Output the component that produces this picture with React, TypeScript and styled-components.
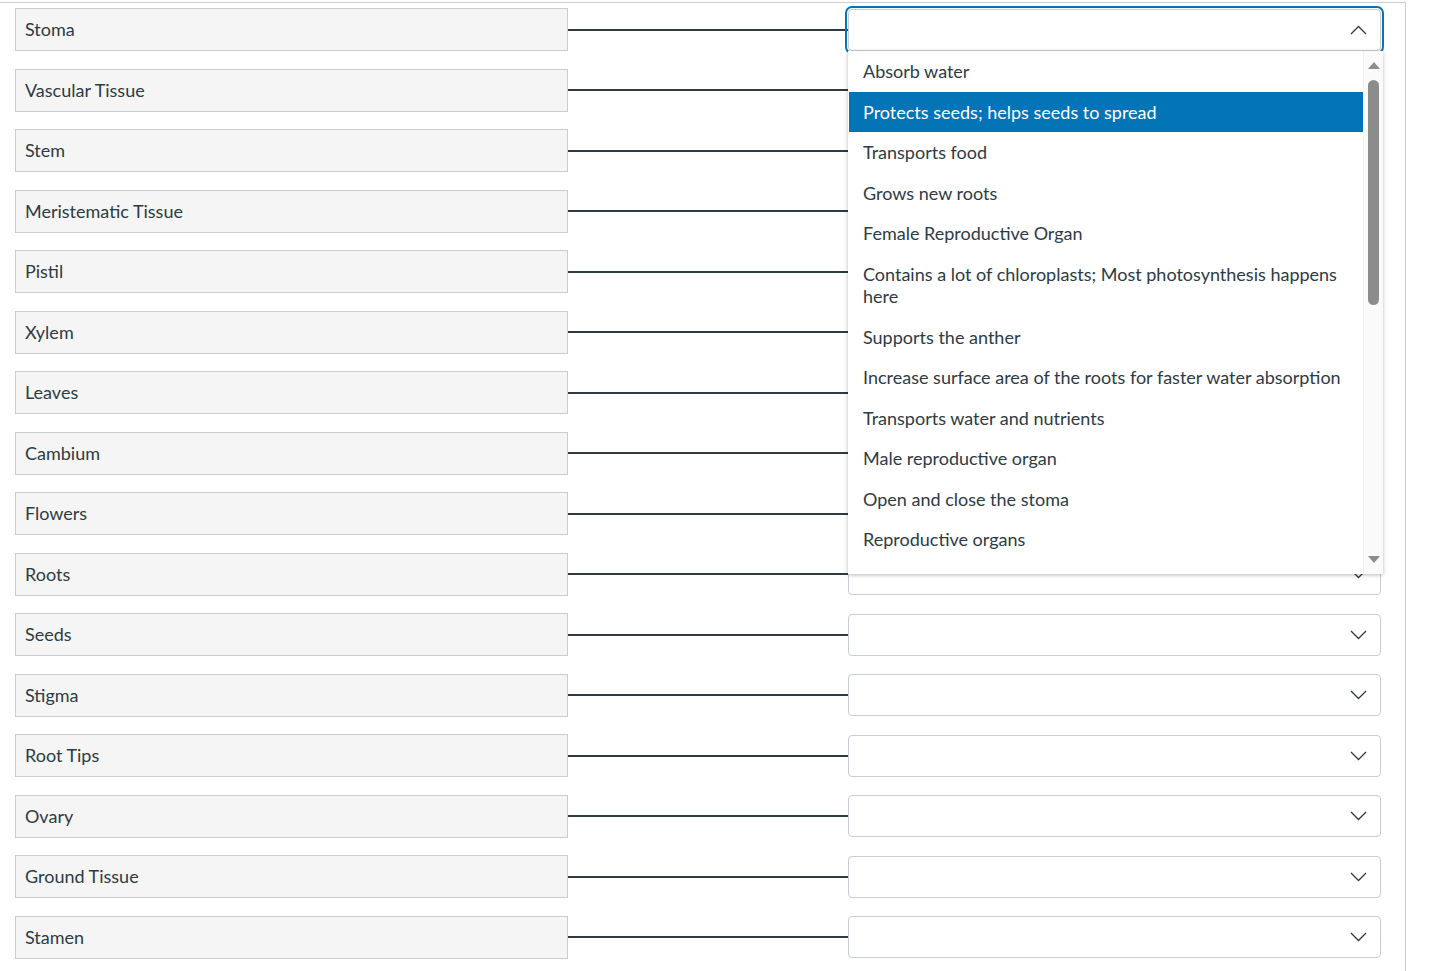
import styled, { createGlobalStyle } from "styled-components";

const GlobalStyle = createGlobalStyle`
  html, body {
    margin: 0;
    padding: 0;
    background: #fff;
    font-family: Lato, "Open Sans", sans-serif;
    color: #2d3b45;
  }
`

const Page = styled.div`
  padding-top: 2px;
  height: 969px;
  overflow: hidden;
`

const Frame = styled.div`
  position: relative;
  width: 1406px;
  height: 100%;
  box-sizing: border-box;
  border-top: 1px solid #c7cdd1;
  border-right: 1px solid #c7cdd1;
  padding: 5px 0 0 15px;
  display: flex;
  flex-direction: column;
  gap: 17.5px;
`

const Row = styled.div`
  display: flex;
  align-items: center;
  height: 43px;
`

const Term = styled.div`
  flex: 0 0 553px;
  height: 43px;
  box-sizing: border-box;
  background: #f5f5f5;
  border: 1px solid #c7cdd1;
  padding: 0 0 1px 9px;
  display: flex;
  align-items: center;
  font-size: 18px;
`

const Connector = styled.div`
  flex: 0 0 280px;
  height: 2px;
  background: #2d3b45;
`

const Select = styled.div<{ $open?: boolean }>`
  position: relative;
  flex: 0 0 533px;
  height: 42px;
  box-sizing: border-box;
  background: #fff;
  border: 1px solid #c7cdd1;
  border-radius: 4px;
  display: flex;
  align-items: center;
  justify-content: flex-end;
  padding-right: 13px;
  outline: ${(p) => (p.$open ? "2px solid #0374b5" : "none")};
  outline-offset: 1px;
`

const Menu = styled.div`
  position: absolute;
  left: 848px;
  top: 48px;
  width: 535px;
  height: 523px;
  background: #fff;
  box-shadow: 0 1px 4px rgba(0, 0, 0, 0.28);
  display: flex;
  z-index: 5;
`

const Options = styled.ul`
  flex: 1;
  margin: 0;
  padding: 0 0 0 1px;
  list-style: none;
  overflow: hidden;
`

const Option = styled.li<{ $active?: boolean }>`
  padding: 9px 14px;
  font-size: 18px;
  line-height: 22.5px;
  background: ${(p) => (p.$active ? "#0374b5" : "transparent")};
  color: ${(p) => (p.$active ? "#fff" : "#2d3b45")};
`

const Scrollbar = styled.div`
  flex: 0 0 20px;
  background: #fafafa;
  border-left: 1px solid #f0f0f0;
  display: flex;
  flex-direction: column;
  align-items: center;
  padding: 11px 0 11px;
  box-sizing: border-box;
`

const Thumb = styled.div`
  width: 11px;
  height: 225px;
  margin-top: 11px;
  border-radius: 6px;
  background: #8c8c8c;
`

const Arrow = styled.div<{ $down?: boolean }>`
  width: 0;
  height: 0;
  border-left: 6px solid transparent;
  border-right: 6px solid transparent;
  ${(p) =>
    p.$down
      ? "border-top: 7px solid #8c8c8c; margin-top: auto;"
      : "border-bottom: 7px solid #8c8c8c;"}
`

const Chevron = ({ up }: { up?: boolean }) => (
  <svg width="17" height="10" viewBox="0 0 17 10">
    <polyline
      points={up ? "1,9 8.5,1.5 16,9" : "1,1 8.5,8.5 16,1"}
      fill="none"
      stroke="#2d3b45"
      strokeWidth="1.3"
    />
  </svg>
)

const terms = [
  "Stoma",
  "Vascular Tissue",
  "Stem",
  "Meristematic Tissue",
  "Pistil",
  "Xylem",
  "Leaves",
  "Cambium",
  "Flowers",
  "Roots",
  "Seeds",
  "Stigma",
  "Root Tips",
  "Ovary",
  "Ground Tissue",
  "Stamen",
]

const options = [
  "Absorb water",
  "Protects seeds; helps seeds to spread",
  "Transports food",
  "Grows new roots",
  "Female Reproductive Organ",
  "Contains a lot of chloroplasts; Most photosynthesis happens here",
  "Supports the anther",
  "Increase surface area of the roots for faster water absorption",
  "Transports water and nutrients",
  "Male reproductive organ",
  "Open and close the stoma",
  "Reproductive organs",
]

export default function App() {
  return (
    <>
      <GlobalStyle />
      <Page>
        <Frame>
          {terms.map((t, i) => (
            <Row key={t}>
              <Term>{t}</Term>
              <Connector />
              <Select $open={i === 0}>
                <Chevron up={i === 0} />
              </Select>
            </Row>
          ))}
          <Menu>
            <Options>
              {options.map((o, i) => (
                <Option key={o} $active={i === 1}>
                  {o}
                </Option>
              ))}
            </Options>
            <Scrollbar>
              <Arrow />
              <Thumb />
              <Arrow $down />
            </Scrollbar>
          </Menu>
        </Frame>
      </Page>
    </>
  )
}
